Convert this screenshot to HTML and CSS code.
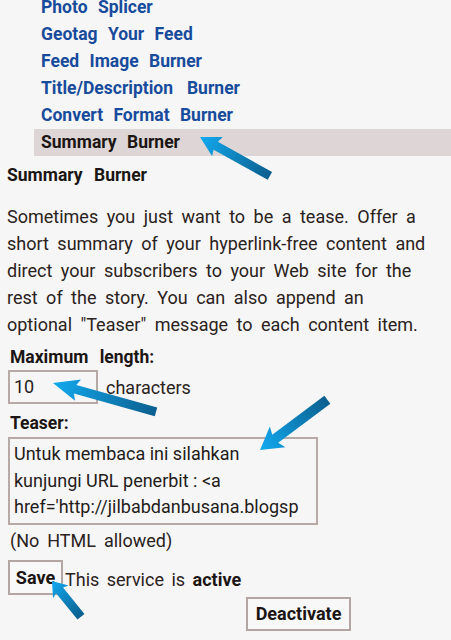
FILE: index.html
```html
<!DOCTYPE html>
<html>
<head>
<meta charset="utf-8">
<link rel="stylesheet" href="styles.css">
</head>
<body>
<div class="page">
  <ul class="nav">
    <li><a href="#">Photo Splicer</a></li>
    <li><a href="#">Geotag Your Feed</a></li>
    <li><a href="#">Feed Image Burner</a></li>
    <li><a href="#">Title/Description&thinsp; Burner</a></li>
    <li><a href="#">Convert Format Burner</a></li>
    <li class="current">Summary Burner</li>
  </ul>
  <h2 class="title">Summary Burner</h2>
  <p class="desc">Sometimes you just want to be a tease. Offer a<br>short summary of your hyperlink-free content and<br>direct your subscribers to your Web site for the<br>rest of the story. You can also append an<br>optional "Teaser" message to each content item.</p>
  <div class="field-label">Maximum length:</div>
  <div class="len-row">
    <div class="input">10</div>
    <span class="unit">characters</span>
  </div>
  <div class="field-label">Teaser:</div>
  <div class="textarea">Untuk membaca ini silahkan<br>kunjungi URL penerbit : &lt;a<br>href='http://jilbabdanbusana.blogsp</div>
  <div class="note">(No HTML allowed)</div>
  <div class="save-row">
    <div class="btn btn-save">Save</div>
    <span class="status">This service is <b>active</b></span>
  </div>
  <div class="deact-row">
    <div class="btn btn-deact">Deactivate</div>
  </div>

  <svg class="arrows" width="451" height="640" viewBox="0 0 451 640">
    <defs>
      <linearGradient id="ag" x1="0" y1="0" x2="1" y2="0">
        <stop offset="0" stop-color="#12a9ef"/>
        <stop offset="1" stop-color="#0b5f8e"/>
      </linearGradient>
    </defs>
    <polygon fill="url(#ag)" transform="translate(200 143) rotate(29.1)" points="0,0 20,-11 18,-4.5 80,-4.5 80,4.5 18,4.5 20,11"/>
    <polygon fill="url(#ag)" transform="translate(53 389) rotate(15.7)" points="0,0 26,-11 23,-4.5 107,-4.5 107,4.5 23,4.5 26,11"/>
    <polygon fill="url(#ag)" transform="translate(260 456) rotate(-36.7)" points="0,0 22,-13 19,-5 84,-5 84,5 19,5 22,13"/>
    <polygon fill="url(#ag)" transform="translate(52 587) rotate(51)" points="0,0 14,-10 12,-4.5 46,-4.5 46,4.5 12,4.5 14,10"/>
  </svg>
</div>
</body>
</html>
```

FILE: styles.css
```css
html, body {
  margin: 0;
  padding: 0;
  background: #f7f6f6;
}
body {
  font-family: Roboto, "Noto Sans", sans-serif;
  color: #231c1a;
  width: 451px;
  height: 640px;
  overflow: hidden;
}
.page {
  position: relative;
  width: 451px;
  height: 640px;
}
.nav {
  list-style: none;
  margin: -6px 0 0 34px;
  padding: 0;
}
.nav li {
  height: 27px;
  line-height: 27px;
  padding-left: 7px;
  font-size: 17.5px;
  font-weight: bold;
  word-spacing: 6px;
  white-space: nowrap;
}
.nav a {
  color: #174b9c;
  text-decoration: none;
}
.nav li.current {
  background: #ded6d6;
  color: #1b1514;
}
.title {
  margin: 6px 0 0 0;
  padding-left: 7px;
  font-size: 17.5px;
  line-height: 27px;
  font-weight: bold;
  color: #1b1514;
  word-spacing: 7px;
}
.desc {
  margin: 14px 0 0 0;
  padding: 0 7px;
  width: 440px;
  box-sizing: border-box;
  white-space: nowrap;
  font-size: 18px;
  line-height: 27px;
  word-spacing: 4px;
  color: #2a2220;
}
.field-label {
  padding-left: 10px;
  font-size: 17.5px;
  font-weight: bold;
  line-height: 24px;
  color: #1b1514;
  word-spacing: 7px;
}
.desc + .field-label {
  margin-top: 7px;
}
.len-row {
  display: flex;
  align-items: center;
  gap: 8px;
  margin: 1px 0 0 8px;
}
.input {
  box-sizing: border-box;
  width: 90px;
  height: 34px;
  border: 2px solid #b7aaa6;
  padding-left: 4px;
  font-size: 18px;
  line-height: 30px;
  color: #231c1a;
}
.unit {
  font-size: 18px;
  color: #2a2220;
}
.len-row + .field-label {
  margin-top: 7px;
}
.textarea {
  box-sizing: border-box;
  width: 310px;
  height: 88px;
  margin: 2px 0 0 8px;
  border: 2px solid #b7aaa6;
  padding: 2px 0 0 4px;
  font-size: 18px;
  line-height: 26.5px;
  color: #231c1a;
  overflow: hidden;
  white-space: nowrap;
}
.note {
  padding-left: 10px;
  margin-top: 4px;
  font-size: 18px;
  line-height: 24px;
  color: #2a2220;
  word-spacing: 3.5px;
}
.save-row {
  display: flex;
  align-items: center;
  gap: 2px;
  margin: 7px 0 0 8px;
}
.btn {
  box-sizing: border-box;
  height: 35px;
  border: 2px solid #b3a6a2;
  background: #f9f8f8;
  font-size: 18px;
  font-weight: bold;
  line-height: 31px;
  text-align: center;
  color: #1b1514;
}
.btn-save {
  width: 55px;
}
.status {
  font-size: 18px;
  color: #2a2220;
  word-spacing: 3px;
  margin-top: 3px;
}
.status b {
  color: #1b1514;
}
.deact-row {
  margin: 2px 0 0 246px;
  display: flex;
}
.btn-deact {
  width: 105px;
  height: 34px;
  line-height: 30px;
}
.arrows {
  position: absolute;
  left: 0;
  top: 0;
  pointer-events: none;
}
```
